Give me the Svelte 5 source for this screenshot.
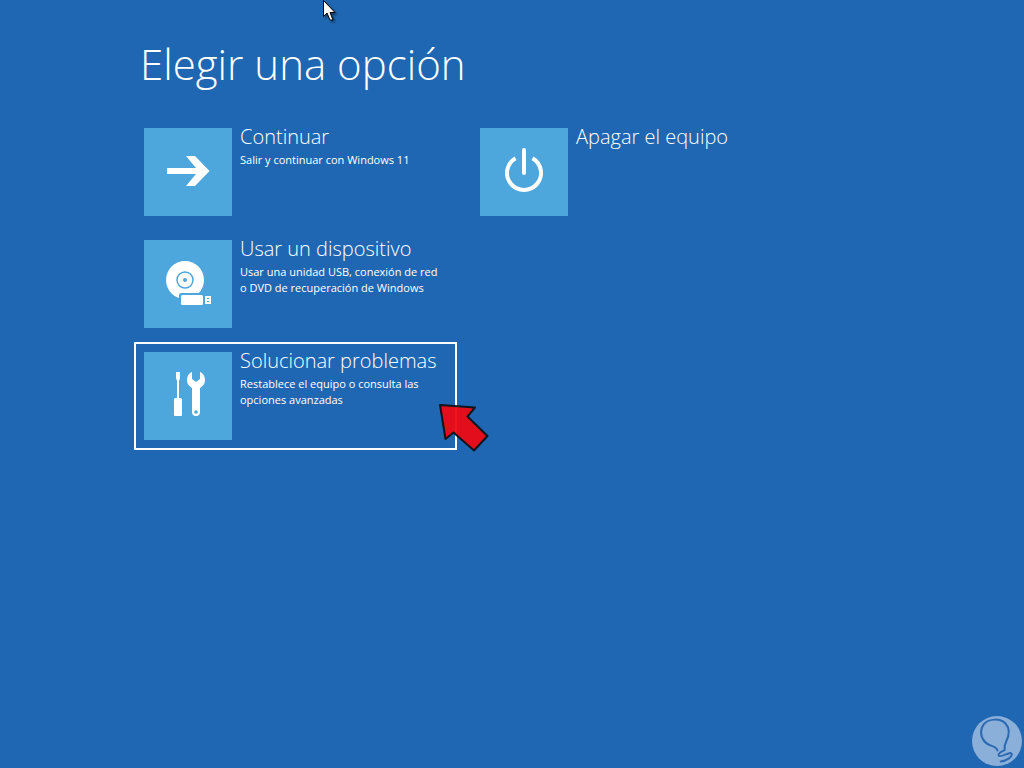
<script lang="ts">
    type Option = {
        id: string;
        title: string;
        text?: string;
        icon: 'arrow' | 'device' | 'tools' | 'power';
    };

    const columns: Option[][] = [
        [
            { id: 'continue', title: 'Continuar', text: 'Salir y continuar con Windows 11', icon: 'arrow' },
            { id: 'device', title: 'Usar un dispositivo', text: 'Usar una unidad USB, conexión de red o DVD de recuperación de Windows', icon: 'device' },
            { id: 'troubleshoot', title: 'Solucionar problemas', text: 'Restablece el equipo o consulta las opciones avanzadas', icon: 'tools' }
        ],
        [
            { id: 'shutdown', title: 'Apagar el equipo', icon: 'power' }
        ]
    ];

    let selected = $state('troubleshoot');
</script>

<main class="page">
    <h1>Elegir una opción</h1>

    <div class="columns">
        {#each columns as column}
            <div class="column">
                {#each column as option (option.id)}
                    <button
                        type="button"
                        class="option"
                        class:selected={selected === option.id}
                        onclick={() => (selected = option.id)}
                    >
                        <span class="tile">
                            <svg viewBox="0 0 88 88" aria-hidden="true">
                                {#if option.icon === 'arrow'}
                                    <path fill="#fff" d="M23 40h29L42 28h9l14.5 15L51 58h-9l10-12H23z" />
                                {:else if option.icon === 'device'}
                                    <circle cx="41" cy="40" r="19" fill="#fff" />
                                    <circle cx="41" cy="40" r="8" fill="none" stroke="#4da6dc" stroke-width="1.5" />
                                    <circle cx="41" cy="40" r="2" fill="#4da6dc" />
                                    <rect x="35" y="53" width="26" height="14" rx="2.5" fill="#4da6dc" />
                                    <rect x="37" y="55" width="22" height="10" rx="1.5" fill="#fff" />
                                    <path fill="#fff" d="M61 56h6v8h-6z" />
                                    <path fill="#4da6dc" d="M63 58h2v1h-2zM63 61h2v1h-2z" />
                                {:else if option.icon === 'tools'}
                                    <path fill="#fff" d="M32 20h4v6l-1 3v17h1.5q1.5 0 1.5 1.5V63q0 1-1 1h-6q-1 0-1-1V47.5q0-1.5 1.5-1.5H33V29l-1-3z" />
                                    <path fill="#fff" fill-rule="evenodd" d="M48 20v7l4 3 4-3v-7c3 1 5 4.5 5 8 0 4-2 6-5 8v24a4 4 0 0 1-8 0V36c-3-2-5-4-5-8 0-3.5 2-7 5-8zM52 58.2a1.8 1.8 0 1 0 0 3.6 1.8 1.8 0 0 0 0-3.6z" />
                                {:else}
                                    <path fill="none" stroke="#fff" stroke-width="4" d="M35.5 30.2a17 17 0 1 0 17 0" />
                                    <path fill="none" stroke="#fff" stroke-width="4" stroke-linecap="round" d="M44 22v23" />
                                {/if}
                            </svg>
                        </span>
                        <span class="label">
                            <span class="title">{option.title}</span>
                            {#if option.text}<span class="text">{option.text}</span>{/if}
                        </span>
                        {#if option.id === 'troubleshoot'}
                            <svg class="pointer" viewBox="0 0 52 50" aria-hidden="true">
                                <path d="M2 2l35 2.5-7.5 9L49.5 33 36 47.5 15.5 29.5 7.5 36z" />
                            </svg>
                        {/if}
                    </button>
                {/each}
            </div>
        {/each}
    </div>

    <svg class="cursor" viewBox="0 0 13 21" aria-hidden="true">
        <path fill="#fff" stroke="#000" d="M.5.5v16l3.5-3.5 3 7h3l-3-7.5h5z" />
    </svg>

    <svg class="watermark" viewBox="0 0 50 50" aria-hidden="true">
        <circle cx="25" cy="25" r="25" fill="#8aafd8" />
        <path d="M25.5 34.5C24 29 17 31 12.5 25.5 8 20 8 13 12 8 17 2.5 28 2 33.5 7.5c5.5 6 3.5 12.5.5 18.5-1.5 3-2 5-1.3 8-3 2-7 3-6 5.5 1.5 3 12-5 13-1.5.5 3-5 7-11 7.5" />
    </svg>
</main>

<style>
    :global(body) {
        margin: 0;
        background: #1f67b3;
    }

    .page {
        position: relative;
        box-sizing: border-box;
        min-height: 100vh;
        padding: 34px 24px 24px 134px;
        overflow: hidden;
        color: #fff;
        font-family: "Open Sans", "Noto Sans", sans-serif;
    }

    h1 {
        margin: 0 0 24px 6px;
        font-size: 42px;
        font-weight: 300;
        line-height: 60px;
    }

    .columns {
        display: flex;
        flex-wrap: wrap;
        gap: 13px;
    }

    .column {
        display: flex;
        flex-direction: column;
        gap: 4px;
        flex: 0 1 323px;
    }

    .option {
        position: relative;
        display: flex;
        align-items: flex-start;
        gap: 8px;
        padding: 8px;
        border: 2px solid transparent;
        background: none;
        color: inherit;
        font: inherit;
        text-align: left;
        cursor: default;
    }

    .option:focus {
        outline: none;
    }

    .option.selected,
    .option:focus-visible {
        border-color: #fff;
    }

    .tile {
        flex: none;
        width: 88px;
        height: 88px;
        background: #4da6dc;
    }

    .tile svg {
        display: block;
    }

    .title,
    .text {
        display: block;
    }

    .title {
        font-size: 20px;
        font-weight: 300;
        line-height: 24px;
        white-space: nowrap;
        margin-top: -3px;
    }

    .text {
        max-width: 200px;
        margin-top: 3px;
        font-size: 11px;
        line-height: 16px;
    }

    .pointer {
        position: absolute;
        left: 302px;
        top: 59px;
        width: 52px;
        height: 50px;
    }

    .pointer path {
        fill: #ee0a14;
        fill-opacity: 0.95;
        stroke: #10141c;
        stroke-width: 2;
        stroke-linejoin: round;
    }

    .cursor {
        position: absolute;
        left: 323px;
        top: 0;
        width: 13px;
        height: 21px;
        filter: drop-shadow(2px 2px 1px rgba(0, 0, 0, 0.4));
    }

    .watermark {
        position: absolute;
        right: 2px;
        bottom: 2px;
        width: 50px;
        height: 50px;
    }

    .watermark path {
        fill: none;
        stroke: #2b69b2;
        stroke-width: 2;
        stroke-linecap: round;
    }
</style>
